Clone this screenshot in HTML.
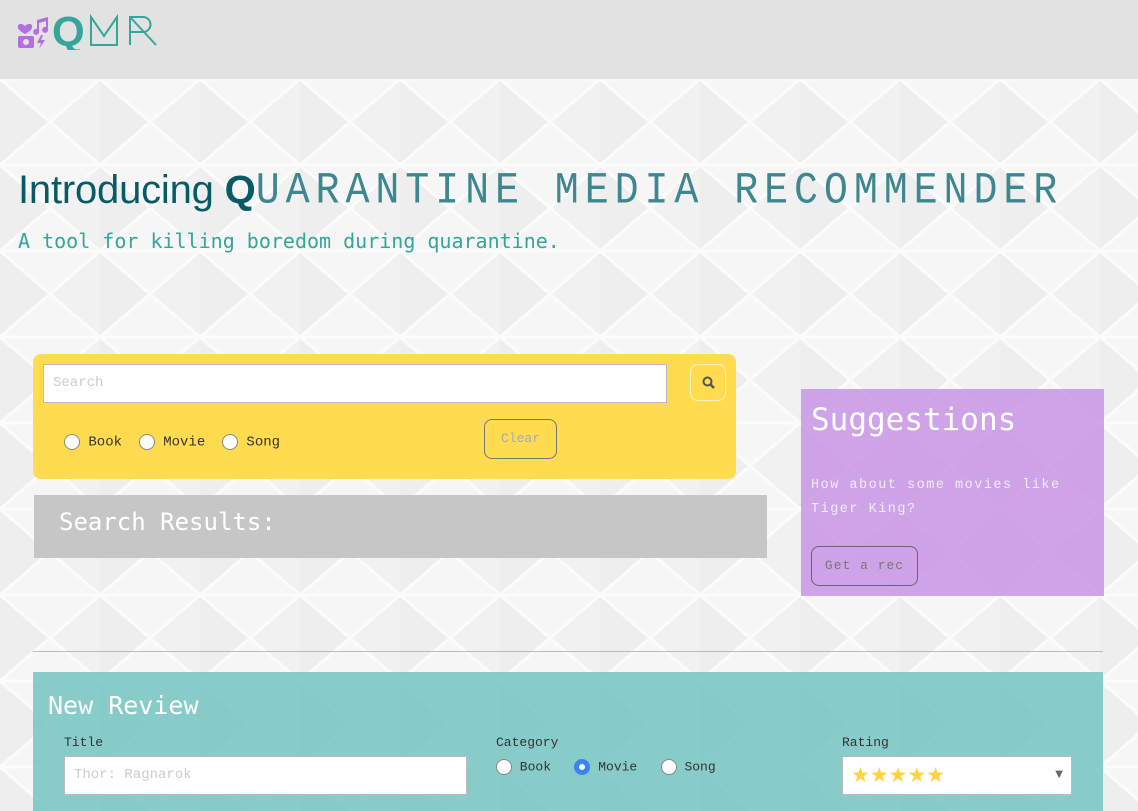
<!DOCTYPE html>
<html><head><meta charset="utf-8"><style>
*{margin:0;padding:0;box-sizing:border-box}
body{width:1138px;height:811px;overflow:hidden;position:relative;background:#f4f4f4;font-family:"Liberation Mono",monospace}
.hdr{position:absolute;left:0;top:0;width:1138px;height:79px;background:#e2e2e2}
.bg{position:absolute;left:0;top:79px}
.abs{position:absolute}
h1{position:absolute;left:18px;top:166px;font-weight:normal;color:#075b66;white-space:nowrap;font-size:40px;line-height:48px}
h1 .s{font-family:"Liberation Sans",sans-serif;letter-spacing:-0.2px}
h1 .m{display:inline-block;font-family:"Liberation Mono",monospace;letter-spacing:5.9px;color:#3f8790;transform:scaleY(1.12);transform-origin:0 80%}
.sub{position:absolute;left:18px;top:229px;font-family:"DejaVu Sans Mono",monospace;font-size:20px;color:#36a59a;white-space:nowrap}
.radio{display:inline-block;width:16px;height:16px;border-radius:50%;background:#fff;border:1px solid #888;vertical-align:middle}
.rl{font-size:14px;color:#333;white-space:nowrap}
</style></head><body>
<div class="hdr"></div>
<svg class="abs" style="left:17px;top:10px" width="140" height="40" viewBox="0 0 140 40">
<path d="M8 16 C4 12,0 14,1 18 C2 21,8 24,8 24 C8 24,14 21,15 18 C16 14,12 12,8 16Z" fill="#b36ee0"/>
<path d="M20 10 L31 7 L31 19 A3 3 0 1 1 29 17 L29 11 L22 13 L22 21 A3 3 0 1 1 20 19Z" fill="#b36ee0"/>
<rect x="1" y="26" width="16" height="12" rx="2" fill="#b36ee0"/><circle cx="9" cy="32" r="3" fill="#e2e2e2"/>
<path d="M24 25 L20 33 L24 33 L22 39 L28 30 L24 30 L26 25Z" fill="#b36ee0"/>
<text x="35" y="36" font-family="Liberation Sans,sans-serif" font-weight="bold" font-size="42" fill="#36a59a">Q</text>
<path d="M74 35 V7 L87 26 L100 7 V35 Z" fill="none" stroke="#36a59a" stroke-width="2"/>
<path d="M113 35 V7 H126 A7.5 7.5 0 0 1 126 22 H113 M114 8 L139 35" fill="none" stroke="#36a59a" stroke-width="2"/>
</svg>
<svg class="bg" width="1138" height="732">
<defs><pattern id="p" width="100" height="86" patternUnits="userSpaceOnUse">
<rect width="100" height="86" fill="#f6f6f6"/>
<path d="M0 0 L50 43 L0 86Z" fill="#eeeeee"/><path d="M50 43 L100 0 L100 86Z" fill="#f1f1f1"/>
<path d="M0 0 L100 0 M0 86 L100 86 M0 0 L100 86 M100 0 L0 86" stroke="#fbfbfb" stroke-width="3"/>
</pattern></defs>
<rect width="1138" height="732" fill="url(#p)"/></svg>
<h1><span class="s">Introducing </span><span class="s" style="font-weight:bold;letter-spacing:0">Q</span><span class="m">UARANTINE MEDIA RECOMMENDER</span></h1>
<div class="sub">A tool for killing boredom during quarantine.</div>

<div class="abs" style="left:33px;top:354px;width:703px;height:125px;background:#ffdb50;border-radius:8px"></div>
<div class="abs" style="left:43px;top:364px;width:624px;height:39px;background:#fff;border:1px solid #bbb;font-size:14px;color:#ccc;padding:10px 9px">Search</div>
<div class="abs" style="left:690px;top:364px;width:36px;height:37px;border:1px solid #fff3c0;border-radius:8px"><svg width="36" height="37"><circle cx="16.5" cy="16.5" r="4" fill="none" stroke="#555" stroke-width="2"/><path d="M19.5 19.5 L23 23" stroke="#555" stroke-width="2.5"/></svg></div>
<div class="abs rl" style="left:64px;top:434px"><span class="radio"></span> Book &nbsp;<span class="radio"></span> Movie &nbsp;<span class="radio"></span> Song</div>
<div class="abs" style="left:484px;top:419px;width:73px;height:40px;border:1px solid #777;border-radius:8px;font-size:13px;color:#aaa;text-align:center;line-height:38px">Clear</div>

<div class="abs" style="left:34px;top:495px;width:733px;height:63px;background:#c6c6c6;color:#fff;font-family:'DejaVu Sans Mono',monospace;font-size:24px;padding:13px 25px">Search Results:</div>

<div class="abs" style="left:801px;top:389px;width:303px;height:207px;background:rgba(200,148,228,0.85)"></div>
<div class="abs" style="left:811px;top:402px;color:#fff;font-family:'DejaVu Sans Mono',monospace;font-size:31px">Suggestions</div>
<div class="abs" style="left:811px;top:474px;width:290px;color:#eee;font-size:13.5px;line-height:24px;letter-spacing:1.5px">How about some movies like Tiger King?</div>
<div class="abs" style="left:811px;top:546px;width:107px;height:40px;border:1px solid #666;border-radius:8px;font-size:13px;color:#777;text-align:center;line-height:38px;letter-spacing:1px">Get a rec</div>

<div class="abs" style="left:33px;top:651px;width:1070px;height:1px;background:#bbb"></div>

<div class="abs" style="left:33px;top:672px;width:1070px;height:139px;background:rgba(120,198,193,0.88)"></div>
<div class="abs" style="left:48px;top:691px;color:#fff;font-family:'DejaVu Sans Mono',monospace;font-size:25px">New Review</div>
<div class="abs" style="left:64px;top:735px;font-size:13px;color:#333">Title</div>
<div class="abs" style="left:64px;top:756px;width:403px;height:39px;background:#fff;border:1px solid #bbb;font-size:14px;color:#ccc;padding:10px 9px">Thor: Ragnarok</div>
<div class="abs" style="left:496px;top:735px;font-size:13px;color:#333">Category</div>
<div class="abs rl" style="left:496px;top:759px;font-size:13px"><span class="radio"></span> Book &nbsp; <span class="radio" style="background:#fff;border:5px solid #3b82f6"></span> Movie &nbsp; <span class="radio"></span> Song</div>
<div class="abs" style="left:842px;top:735px;font-size:13px;color:#333">Rating</div>
<div class="abs" style="left:842px;top:756px;width:230px;height:39px;background:#fff;border:1px solid #bbb;font-family:'DejaVu Sans',sans-serif;font-size:21px;color:#ffd23f;padding:6px 8px;letter-spacing:0px">★★★★★<span style="position:absolute;right:8px;top:12px;font-size:10px;color:#666">▼</span></div>
</body></html>
